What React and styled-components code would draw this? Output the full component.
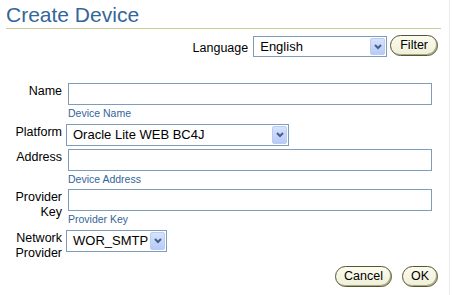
import styled, { createGlobalStyle } from "styled-components";

const GlobalStyle = createGlobalStyle`
    body {
        margin: 0;
        background: #fff;
        font-family: "Liberation Sans", Arial, sans-serif;
    }
`

const Page = styled.div`
    box-sizing: border-box;
    width: 450px;
    min-height: 295px;
    padding: 3px 0 0 6px;
    border-right: 1px solid #ececec;
`

const Title = styled.h1`
    width: 435px;
    margin: 0;
    padding-bottom: 1px;
    font-size: 21px;
    font-weight: normal;
    line-height: 24px;
    color: #336699;
    border-bottom: 1px solid #cccc99;
`

const LanguageRow = styled.div`
    width: 435px;
    box-sizing: border-box;
    padding-right: 3px;
    margin-top: 6px;
    display: flex;
    justify-content: flex-end;
    align-items: flex-start;
    gap: 3px;
`

const InlineLabel = styled.span`
    font-size: 12.5px;
    line-height: 15px;
    padding-top: 6px;
    margin-right: 2px;
    color: #000;
`

const Form = styled.div`
    margin-top: 26px;
    display: flex;
    flex-direction: column;
    gap: 3px;
`

const Row = styled.div`
    display: grid;
    grid-template-columns: 56px 1fr;
    column-gap: 4px;
    align-items: start;
`

const Label = styled.div`
    text-align: right;
    font-size: 12.5px;
    line-height: 15px;
    padding-top: 1px;
    color: #000;
`

const Field = styled.div`
    display: flex;
    flex-direction: column;
    align-items: flex-start;
`

const TextInput = styled.div`
    box-sizing: border-box;
    width: 364px;
    height: 22px;
    margin-left: 2px;
    border: 1px solid #7f9db9;
    background: #fff;
`

const Hint = styled.div`
    margin: 1px 0 0 2px;
    font-size: 10.5px;
    line-height: 14.5px;
    color: #336699;
`

const SelectBox = styled.div`
    box-sizing: border-box;
    width: ${p => p.$w}px;
    height: ${p => p.$h || 22}px;
    margin-top: ${p => p.$mt || 0}px;
    border: 1px solid #7f9db9;
    background: #fff;
    display: flex;
    padding: 1px;
`

const SelectValue = styled.div`
    flex: 1;
    padding-left: 5px;
    font-size: 13px;
    line-height: ${p => (p.$h || 22) - 4}px;
    color: #000;
    white-space: nowrap;
`

const ArrowBox = styled.div`
    box-sizing: border-box;
    flex: none;
    width: 15px;
    border: 1px solid #b9ccf3;
    border-radius: 2px;
    background: linear-gradient(#d6e2fe, #b7cbf7);
    display: flex;
    align-items: center;
    justify-content: center;
`

const Button = styled.button`
    box-sizing: border-box;
    height: 21px;
    padding: 0 ${p => p.$px || 8}px;
    border: 1px solid #55552f;
    border-radius: 11px;
    background: linear-gradient(#fbfbef, #efefd8);
    box-shadow: inset -1px -1px 0 #a9a985;
    font-family: "Liberation Sans", Arial, sans-serif;
    font-size: 12.5px;
    line-height: 19px;
    color: #000;
`

const ButtonRow = styled.div`
    width: 435px;
    box-sizing: border-box;
    padding-right: 3px;
    margin-top: 5px;
    display: flex;
    justify-content: flex-end;
    gap: 10px;
`

const Chevron = () => (
    <svg width="8" height="6" viewBox="0 0 8 6">
        <polyline points="1,1 4,4 7,1" fill="none" stroke="#4a5f86" strokeWidth="2" />
    </svg>
)

const Select = ({ value, w, h, mt }) => (
    <SelectBox $w={w} $h={h} $mt={mt}>
        <SelectValue $h={h}>{value}</SelectValue>
        <ArrowBox><Chevron /></ArrowBox>
    </SelectBox>
)

const App = () => {
    return (
        <>
            <GlobalStyle />
            <Page>
                <Title>Create Device</Title>
                <LanguageRow>
                    <InlineLabel>Language</InlineLabel>
                    <Select value="English" w={134} h={21} mt={1} />
                    <Button $px={9}>Filter</Button>
                </LanguageRow>
                <Form>
                    <Row>
                        <Label>Name</Label>
                        <Field>
                            <TextInput />
                            <Hint>Device Name</Hint>
                        </Field>
                    </Row>
                    <Row>
                        <Label>Platform</Label>
                        <Field>
                            <Select value="Oracle Lite WEB BC4J" w={223} />
                        </Field>
                    </Row>
                    <Row>
                        <Label>Address</Label>
                        <Field>
                            <TextInput />
                            <Hint>Device Address</Hint>
                        </Field>
                    </Row>
                    <Row>
                        <Label>Provider Key</Label>
                        <Field>
                            <TextInput />
                            <Hint>Provider Key</Hint>
                        </Field>
                    </Row>
                    <Row>
                        <Label>Network Provider</Label>
                        <Field>
                            <Select value="WOR_SMTP" w={101} h={22} />
                        </Field>
                    </Row>
                </Form>
                <ButtonRow>
                    <Button>Cancel</Button>
                    <Button>OK</Button>
                </ButtonRow>
            </Page>
        </>
    )
}

export default App;
